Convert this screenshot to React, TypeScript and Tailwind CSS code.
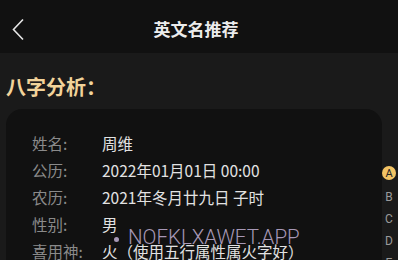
import React from "react";

const rows: [string, string][] = [
  ["姓名:", "周维"],
  ["公历:", "2022年01月01日 00:00"],
  ["农历:", "2021年冬月廿九日 子时"],
  ["性别:", "男"],
  ["喜用神:", "火（使用五行属性属火字好）"],
];

export default function App() {
  return (
    <div
      className="relative w-[398px] h-[260px] overflow-hidden bg-[#1a1a1a]"
      style={{ fontFamily: '"Noto Sans CJK SC", "Noto Sans", sans-serif' }}
    >
      <div className="relative h-[53px] bg-[#111111] flex items-center justify-center">
        <svg
          className="absolute left-[11px] top-[18px]"
          width="14"
          height="23"
          viewBox="0 0 14 23"
          fill="none"
        >
          <path d="M12 1.5 L2.5 11.5 L12 21.5" stroke="#e6e6e6" strokeWidth="1.6" />
        </svg>
        <div className="text-[17px] font-bold text-[#ececec] mr-[6px] mt-[3px] leading-none">
          英文名推荐
        </div>
      </div>

      <div className="pt-[20px] pl-[6px] h-[48px] text-[20px] leading-[28px] font-bold text-[#f2d39a]">
        八字分析：
      </div>

      <div className="mt-[8px] ml-[6px] w-[376px] h-[200px] rounded-[16px] bg-[#111111] pt-[21px] pl-[26px]">
        {rows.map(([k, v]) => (
          <div key={k} className="flex h-[27px] items-center text-[15.5px]">
            <div className="w-[70px] text-[#8a8a8a]">{k}</div>
            <div className="text-[#e2e2e2] whitespace-nowrap">{v}</div>
          </div>
        ))}
      </div>

      <div
        className="absolute left-[381px] top-[166px] w-[16px] flex flex-col items-center text-[12px] text-[#9a9a9a]"
        style={{ fontFamily: 'Roboto, "Liberation Sans", sans-serif' }}
      >
        <div className="w-[14px] h-[14px] rounded-full bg-[#f2c364] text-[#222] flex items-center justify-center text-[11px] leading-none">
          A
        </div>
        <div className="mt-[6px] h-[22px] leading-[22px]">B</div>
        <div className="h-[22px] leading-[22px]">C</div>
        <div className="h-[22px] leading-[22px]">D</div>
        <div className="h-[22px] leading-[22px]">E</div>
      </div>

      <div
        className="absolute left-[114px] top-[227px] flex items-center text-[#a798b6] text-[20.5px] font-light leading-none"
        style={{ fontFamily: 'Roboto, "Liberation Sans", sans-serif' }}
      >
        <span className="w-[5px] h-[5px] rounded-full bg-[#a798b6] mr-[9px] mt-[5px]"></span>
        <span>NOFKLXAWET.APP</span>
      </div>
    </div>
  );
}
